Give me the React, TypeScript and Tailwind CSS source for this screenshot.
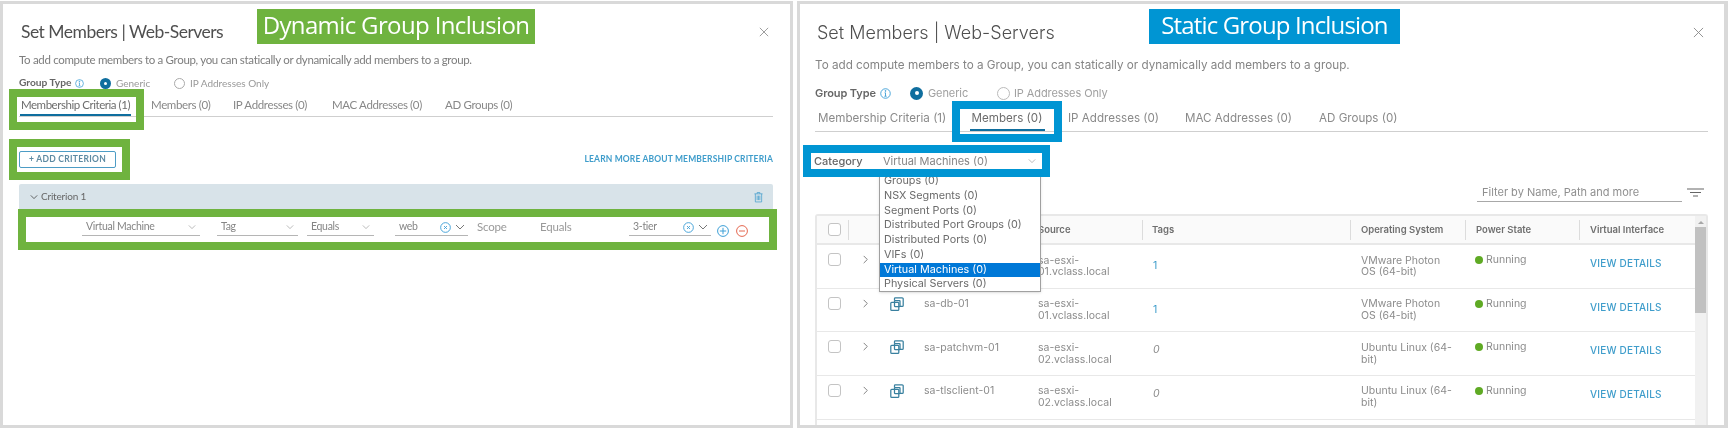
import React from "react";

const ui = "font-['Inter',sans-serif]";

function Chevron({ cls, down = true }: { cls: string; down?: boolean }) {
  return (
    <svg viewBox="0 0 10 10" className={cls} fill="none" stroke="currentColor" strokeWidth="1">
      {down ? <path d="M1 3l4 4 4-4" /> : <path d="M3 1l4 4-4 4" />}
    </svg>
  );
}

function XCircle({ cls }: { cls: string }) {
  return (
    <svg viewBox="0 0 12 12" className={cls} fill="none" stroke="#3d9fd6" strokeWidth="1">
      <circle cx="6" cy="6" r="5.3" />
      <path d="M4.4 4.4l3.2 3.2M7.6 4.4l-3.2 3.2" />
    </svg>
  );
}

function CloseX({ cls }: { cls: string }) {
  return (
    <svg viewBox="0 0 12 12" className={cls} fill="none" stroke="#8a8a8a" strokeWidth="1">
      <path d="M1 1l10 10M11 1L1 11" />
    </svg>
  );
}

function Info({ cls }: { cls: string }) {
  return (
    <svg viewBox="0 0 12 12" className={cls} fill="none" stroke="#3d9fd6" strokeWidth="1">
      <circle cx="6" cy="6" r="5.2" />
      <path d="M6 5.2v3.6M4.8 9h2.4M5 5.2h1" />
      <circle cx="6" cy="3.2" r="0.5" fill="#3d9fd6" />
    </svg>
  );
}

function VmIcon() {
  return (
    <svg viewBox="0 0 14 14" className="w-[14px] h-[14px] ml-[1px]" fill="none" stroke="#39809f" strokeWidth="1.25">
      <path d="M4.5 3.5V1.6a.8.8 0 0 1 .8-.8h6.9a1 1 0 0 1 1 1v6.6a.9.9 0 0 1-.9.9H10" />
      <rect x="0.8" y="5.4" width="8" height="7.9" rx="0.9" />
      <rect x="4.5" y="3.5" width="5.5" height="6" rx="0.5" />
    </svg>
  );
}

function Frame({ color, children, cls = "" }: { color: string; children: React.ReactNode; cls?: string }) {
  return (
    <div className={`relative ${cls}`}>
      <div className={`absolute -inset-[8px] border-[8px] pointer-events-none z-10 ${color}`} />
      {children}
    </div>
  );
}

function Sel({ w, label, x = false }: { w: string; label: string; x?: boolean }) {
  return (
    <div className={`${w} h-[17px] border-b border-[#b5b5b5] flex items-center pl-[4px] pr-[2px] text-[#858585] shrink-0`}>
      <span className="flex-1 whitespace-nowrap">{label}</span>
      {x ? <XCircle cls="w-[11px] h-[11px] mr-[4px]" /> : null}
      <Chevron cls={x ? "w-[10px] h-[10px] text-[#777] mr-[1px]" : "w-[8px] h-[8px] text-[#aaa] mr-[2px]"} />
    </div>
  );
}

function LeftPanel() {
  return (
    <section className="relative w-[793px] h-[427px] shrink-0 border-[3px] border-[#d9d9d9] bg-white pl-[16px] pr-[17px] overflow-hidden font-['Lato',sans-serif]">
      <div className="absolute left-[254px] top-[5px] w-[278px] h-[35px] pb-[4px] bg-[#6fb33f] text-white flex items-center justify-center text-[24px] whitespace-nowrap font-['Open_Sans',sans-serif] tracking-[-0.63px] z-20">
        Dynamic Group Inclusion
      </div>
      <header className="mt-[16px] h-[24px] flex items-center justify-between">
        <h1 className="text-[17.5px] font-normal text-[#4f4f4f] ml-[2px] tracking-[-0.5px]">Set Members | Web-Servers</h1>
        <CloseX cls="w-[10px] h-[10px] mr-[4px]" />
      </header>
      <p className="mt-[8px] h-[16px] leading-[16px] text-[11.5px] tracking-[-0.32px] text-[#7d7d7d] whitespace-nowrap">To add compute members to a Group, you can statically or dynamically add members to a group.</p>
      <div className="mt-[7px] h-[16px] flex items-center text-[10px] text-[#999] whitespace-nowrap">
        <b className="font-bold text-[#666] w-[56px] text-[10.2px]">Group Type</b>
        <Info cls="w-[9px] h-[11px] mr-[16px]" />
        <span className="w-[11px] h-[11px] rounded-full bg-[#0f6e9e] flex items-center justify-center mr-[5px]"><i className="w-[3px] h-[3px] rounded-full bg-white" /></span>
        <span className="w-[58px]">Generic</span>
        <span className="w-[11px] h-[11px] rounded-full border border-[#aaa] mr-[5px]" />
        <span>IP Addresses Only</span>
      </div>
      <nav className="mt-[4px] h-[22px] flex border-b border-[#cfcfcf] text-[11.5px] tracking-[-0.35px] text-[#888] whitespace-nowrap">
        <Frame color="border-[#6fb33f]" cls="w-[119px] -ml-[2px] mt-[2px] h-[25px]">
          <span className="block ml-[3px] mr-[5px] h-[19px] leading-[16px] text-center border-b-2 border-[#0f6e9e] text-[#6d6d6d] tracking-[-0.45px]">Membership Criteria (1)</span>
        </Frame>
        <span className="ml-[15px] w-[82px] leading-[20px]">Members (0)</span>
        <span className="w-[99px] leading-[20px]">IP Addresses (0)</span>
        <span className="w-[113px] leading-[20px]">MAC Addresses (0)</span>
        <span className="leading-[20px]">AD Groups (0)</span>
      </nav>
      <div className="mt-[34px] h-[17px] flex items-center justify-between">
        <Frame color="border-[#6fb33f]" cls="w-[105px] -ml-[2px] h-[25px] -my-[4px] flex items-center">
          <button className="ml-[2px] w-[97px] h-[17px] rounded-[2px] border border-[#4d9cc5] text-[#5d8aa2] text-[8.5px] font-bold tracking-[0.3px] whitespace-nowrap">+ ADD CRITERION</button>
        </Frame>
        <a className="text-[8.5px] font-bold tracking-[0.15px] text-[#3f9dcb] whitespace-nowrap">LEARN MORE ABOUT MEMBERSHIP CRITERIA</a>
      </div>
      <div className="mt-[16px] h-[25px] bg-[#d8e3e9] rounded-t-[2px] pl-[11px] pr-[10px] flex items-center text-[10px] tracking-[-0.2px] text-[#666]">
        <Chevron cls="w-[8px] h-[8px] text-[#444] mr-[3px]" />
        <span className="flex-1">Criterion 1</span>
        <svg viewBox="0 0 10 12" className="w-[9px] h-[12px]" fill="none" stroke="#4fa3cf" strokeWidth="0.9">
          <path d="M0.5 2.5h9M3.5 2.5V1h3v1.5M1.5 2.5v9h7v-9M3.5 4.5v5M5 4.5v5M6.5 4.5v5" />
        </svg>
      </div>
      <Frame color="border-[#6fb33f]" cls="ml-[7px] mt-[8px] w-[743px] h-[25px]">
        <div className="pl-[56px] pt-[2px] flex items-start text-[10.5px] tracking-[-0.3px] text-[#858585]">
          <Sel w="w-[118px]" label="Virtual Machine" />
          <Sel w="w-[81px] ml-[17px]" label="Tag" />
          <Sel w="w-[67px] ml-[9px]" label="Equals" />
          <Sel w="w-[73px] ml-[21px]" label="web" x />
          <span className="w-[63px] ml-[9px] text-[#999] text-[11.5px] tracking-[-0.2px] leading-[15px]">Scope</span>
          <span className="w-[89px] text-[#999] text-[11.5px] tracking-[-0.2px] leading-[15px]">Equals</span>
          <Sel w="w-[82px]" label="3-tier" x />
          <svg viewBox="0 0 12 12" className="w-[12px] h-[12px] ml-[6px] mt-[6px] shrink-0" fill="none" stroke="#3d9fd6"><circle cx="6" cy="6" r="5.4" /><path d="M6 2.8v6.4M2.8 6h6.4" /></svg>
          <svg viewBox="0 0 12 12" className="w-[12px] h-[12px] ml-[7px] mt-[6px] shrink-0" fill="none" stroke="#e4674f"><circle cx="6" cy="6" r="5.4" /><path d="M3 6h6" /></svg>
        </div>
      </Frame>
    </section>
  );
}

const rows = [
  { id: 1, name: "", src: "01", tag: "1", os: ["VMware Photon", "OS (64-bit)"] },
  { id: 2, name: "sa-db-01", src: "01", tag: "1", os: ["VMware Photon", "OS (64-bit)"] },
  { id: 3, name: "sa-patchvm-01", src: "02", tag: "0", os: ["Ubuntu Linux (64-", "bit)"] },
  { id: 4, name: "sa-tlsclient-01", src: "02", tag: "0", os: ["Ubuntu Linux (64-", "bit)"] },
];
const gridCols = "grid grid-cols-[32px_40px_35px_114px_104px_208px_115px_114px_116px]";

function Table() {
  return (
    <div className="mt-[11px] w-[893px] h-[230px] border-2 border-b-0 border-[#e8e8e8] rounded-t-[3px] flex">
      <div className="w-[878px] shrink-0 text-[10.5px] text-[#8c8c8c] leading-[11.7px]">
        <div className={`${gridCols} h-[29px] bg-[#fafafa] border-b-2 border-[#e8e8e8] font-semibold text-[9.5px] text-[#6f6f6f]`}>
          <div className="pl-[11px] flex items-center"><span className="w-[13px] h-[13px] rounded-[3px] border border-[#c4c4c4] bg-white" /><i className="w-px h-[20px] ml-auto bg-[#dcdcdc]" /></div>
          <div />
          <div />
          <div />
          <div className="flex items-center">Source</div>
          <div className="flex items-center"><i className="w-px h-[20px] bg-[#dcdcdc] mr-[9px]" />Tags</div>
          <div className="flex items-center"><i className="w-px h-[20px] bg-[#dcdcdc] mr-[10px]" />Operating System</div>
          <div className="flex items-center"><i className="w-px h-[20px] bg-[#dcdcdc] mr-[10px]" />Power State</div>
          <div className="flex items-center"><i className="w-px h-[20px] bg-[#dcdcdc] mr-[10px]" />Virtual Interface</div>
        </div>
        {rows.map((r) => (
          <div key={r.id} className={`${gridCols} h-[43.67px] border-b-[1.5px] border-[#e8e8e8]`}>
            <div className="pl-[11px] pt-[8px]"><span className="block w-[13px] h-[13px] rounded-[3px] border border-[#c4c4c4] bg-white" /></div>
            <div className="pl-[12px] pt-[10px]"><Chevron down={false} cls="w-[9px] h-[9px] text-[#777]" /></div>
            <div className="pt-[8px]"><VmIcon /></div>
            <div className="pt-[9.5px]">{r.name}</div>
            <div className="pt-[9.5px]">sa-esxi-<br />{r.src}.vclass.local</div>
            <div className={`pl-[11px] ${r.tag === "1" ? "pt-[15px] text-[#3f9dcb]" : "pt-[12px] italic"}`}>{r.tag}</div>
            <div className="pl-[11px] pt-[9.5px]">{r.os[0]}<br />{r.os[1]}</div>
            <div className="pl-[10px] pt-[9px] flex items-start"><i className="w-[8px] h-[8px] mt-[2px] mr-[3px] rounded-full bg-[#5faa24]" />Running</div>
            <div className="pl-[11px] pt-[13px] text-[#3f9dcb] text-[10px] font-medium tracking-[0.2px]">VIEW DETAILS</div>
          </div>
        ))}
      </div>
      <div className="w-[11px] shrink-0 bg-[#f1f1f1] flex flex-col items-center">
        <span className="mt-[5px] w-0 h-0 border-x-[3px] border-x-transparent border-b-[3px] border-b-[#a8a8a8]" />
        <span className="mt-[3px] w-[11px] h-[86px] bg-[#c1c1c1]" />
      </div>
    </div>
  );
}

function RightPanel() {
  return (
    <section className={`relative flex-1 h-[427px] border-[3px] border-r-[4px] border-[#d9d9d9] bg-white pl-[15px] pr-[16px] overflow-hidden ${ui}`}>
      <div className="absolute left-[349px] top-[5px] w-[251px] h-[35px] pb-[4px] bg-[#0095d3] text-white flex items-center justify-center text-[24px] whitespace-nowrap font-['Open_Sans',sans-serif] tracking-[-0.85px] z-20">
        Static Group Inclusion
      </div>
      <header className="mt-[16px] h-[24px] flex items-center justify-between">
        <h1 className="text-[18px] font-light text-[#4f4f4f] ml-[2px]">Set Members | Web-Servers</h1>
        <CloseX cls="w-[11px] h-[11px] mr-[4px]" />
      </header>
      <p className="mt-[13px] h-[16px] leading-[16px] text-[11.7px] text-[#858585] whitespace-nowrap">To add compute members to a Group, you can statically or dynamically add members to a group.</p>
      <div className="mt-[12px] h-[16px] flex items-center text-[11px] tracking-[-0.1px] text-[#a0a0a0] whitespace-nowrap">
        <b className="font-semibold text-[#666] w-[65px]">Group Type</b>
        <Info cls="w-[11px] h-[11px] mr-[19px]" />
        <span className="w-[13px] h-[13px] rounded-full bg-[#0f6e9e] flex items-center justify-center mr-[5px]"><i className="w-[4px] h-[4px] rounded-full bg-white" /></span>
        <span className="w-[69px]">Generic</span>
        <span className="w-[13px] h-[13px] rounded-full border border-[#bbb] mr-[4px]" />
        <span>IP Addresses Only</span>
      </div>
      <nav className="mt-[4px] h-[27px] flex border-b border-[#cfcfcf] text-[11.6px] text-[#8a8a8a] whitespace-nowrap">
        <span className="ml-[3px] w-[142px] leading-[26px]">Membership Criteria (1)</span>
        <Frame color="border-[#0095d3]" cls="w-[94px] h-[25px] mt-[4px] mr-[14px] flex justify-center">
          <span className="block w-[75px] h-[22px] leading-[18px] text-center border-b-2 border-[#0f6e9e] text-[#6d6d6d]">Members (0)</span>
        </Frame>
        <span className="w-[117px] leading-[26px]">IP Addresses (0)</span>
        <span className="w-[134px] leading-[26px]">MAC Addresses (0)</span>
        <span className="leading-[26px]">AD Groups (0)</span>
      </nav>
      <div className="relative -ml-[4px] mt-[21px] w-[231px]">
        <Frame color="border-[#0095d3]" cls="h-[16px]">
          <div className="h-[16px] flex items-center text-[11px] text-[#858585] whitespace-nowrap">
            <b className="ml-[3px] w-[69px] font-medium text-[#666]">Category</b>
            <span className="flex-1">Virtual Machines (0)</span>
            <Chevron cls="w-[8px] h-[8px] text-[#aaa] mr-[6px]" />
          </div>
        </Frame>
        <ul className="absolute left-[68px] top-[21px] w-[162px] h-[118px] bg-white border-x-[1.5px] border-b-[1.5px] border-[#a0a0a0] z-[5] text-[10.8px] leading-[14.75px] text-[#6b6b6b] shadow-sm">
          {["Groups (0)", "NSX Segments (0)", "Segment Ports (0)", "Distributed Port Groups (0)", "Distributed Ports (0)", "VIFs (0)", "Virtual Machines (0)", "Physical Servers (0)"].map((o) => (
            <li key={o} className={`pl-[4px] h-[14.75px] ${o === "Virtual Machines (0)" ? "bg-[#0078d7] text-white" : ""}`}>{o}</li>
          ))}
        </ul>
      </div>
      <div className="mt-[14px] h-[20px] flex justify-end items-start pr-[4px]">
        <div className="w-[205px] h-[19px] border-b border-[#a8a8a8] pl-[5px] text-[11px] leading-[18px] text-[#8f8f8f]">Filter by Name, Path and more</div>
        <svg viewBox="0 0 17 9" className="w-[17px] h-[9px] ml-[5px] mt-[5px]" fill="none" stroke="#666" strokeWidth="1.2"><path d="M0 1h17M3 4.5h11M6 8h5" /></svg>
      </div>
      <Table />
    </section>
  );
}

export default function App() {
  return (
    <div className="w-[1728px] h-[428px] bg-white pt-[1px] flex gap-[4px] overflow-hidden blur-[0.35px]">
      <LeftPanel />
      <RightPanel />
    </div>
  );
}
